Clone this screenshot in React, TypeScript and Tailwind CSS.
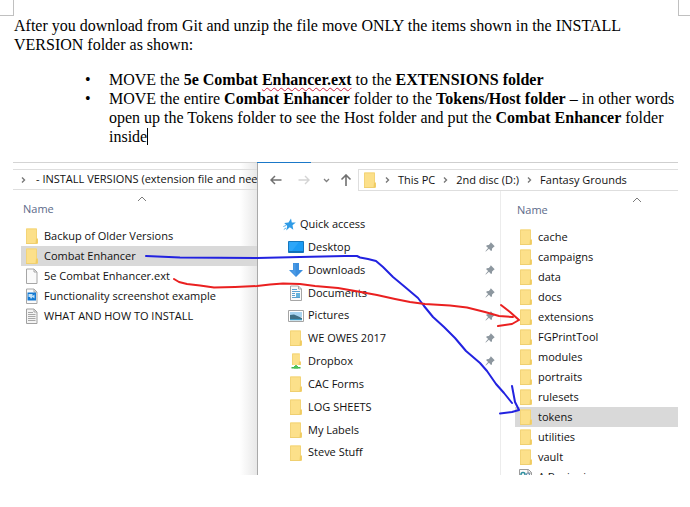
import type { ReactNode } from "react";

const selectedFolders = { left: "Combat Enhancer", right: "tokens" };

const FolderIcon = () => (
  <svg width="14" height="16" viewBox="0 0 14 16" aria-hidden="true">
    <path d="M1 .5h11v10l1 .8v4.200H1z" fill="#fce08a" />
    <path d="M1.500 15V1h10v9.500" fill="none" stroke="#f3d478" />
    <path d="M11 10.500h1.800v5H10.500z" fill="#efcb62" />
    <path d="M1 15.500h11" stroke="#efcf70" />
  </svg>
);

const DropboxIcon = () => (
  <svg width="14" height="16" viewBox="0 0 14 16" aria-hidden="true">
    <path d="M3 .5h8v8l.8.500v3H3z" fill="#fce08a" />
    <path d="M3.500 12V1h7" fill="none" stroke="#f3d478" />
    <path d="M10 8.500h1.800v3.500H9.500z" fill="#efcb62" />
    <path d="M7 12v2.500M2.500 14.800h9" stroke="#3fb64a" strokeWidth="1.600" />
    <path d="M5 13h4v2.500H5z" fill="#4cc257" />
  </svg>
);

const FileIcon = () => (
  <svg width="14" height="16" viewBox="0 0 14 16" aria-hidden="true">
    <path d="M1.500 1h7.500l3 3v11.500H1.500z" fill="#fafafa" stroke="#a6a6a6" />
    <path d="M9 1v3h3" fill="none" stroke="#a6a6a6" />
  </svg>
);

const ImageFileIcon = () => (
  <svg width="14" height="16" viewBox="0 0 14 16" aria-hidden="true">
    <path d="M1.500 1h7.500l3 3v11.500H1.500z" fill="#fafafa" stroke="#a6a6a6" />
    <path d="M9 1v3h3" fill="none" stroke="#a6a6a6" />
    <path d="M2.500 4.500h8.500v8H2.500z" fill="#1479d2" />
    <path d="M3.500 6h4v2l2-1.500v4L7.500 9l-1.500 2-1-2H3.500z" fill="#c4e3f8" />
  </svg>
);

const TextFileIcon = () => (
  <svg width="14" height="16" viewBox="0 0 14 16" aria-hidden="true">
    <path d="M1.500 1h7.500l3 3v11.500H1.500z" fill="#f4f4f4" stroke="#a0a0a0" />
    <path d="M9 1v3h3M3 4.500h5M3 6.500h7.500M3 8.500h7.500M3 10.500h7.500M3 12.500h7.500" fill="none" stroke="#a8a8a8" />
  </svg>
);

const ScriptFileIcon = () => (
  <svg width="14" height="16" viewBox="0 0 14 16" aria-hidden="true">
    <path d="M.500.500h9l3 3v12H.500z" fill="#fafafa" stroke="#9b9b9b" />
    <path d="M9 .5v3.500h3.500" fill="none" stroke="#9b9b9b" />
    <circle cx="4" cy="5.500" r="2" fill="none" stroke="#2f8f9f" strokeWidth="1.500" />
    <circle cx="9" cy="5.500" r="1.500" fill="none" stroke="#6a8fae" strokeWidth="1.200" />
  </svg>
);

const StarIcon = () => (
  <svg width="13" height="13" viewBox="0 0 13 13" aria-hidden="true">
    <path d="M8 .500 8.800 4.400 12.800 4.500 9.500 7.200 10.300 11.800 6.800 9.200 3.200 12.500 4.200 8 1.200 5 5.500 4.500z" fill="#2f9be6" />
    <path d="M.300 8.500 3 7.500M.800 11.500l2.200-1.500" stroke="#5bb2ec" strokeWidth="1" />
  </svg>
);

const DesktopIcon = () => (
  <svg width="16" height="14" viewBox="0 0 16 14" aria-hidden="true">
    <path d="M.500 1.500h15v11H.500z" fill="#1b9cf5" stroke="#1677bd" />
    <path d="M1 11h14v1.300H1z" fill="#1370b5" />
    <path d="M1 2h10L4 11H1z" fill="#2da6f8" />
  </svg>
);

const DownloadIcon = () => (
  <svg width="16" height="16" viewBox="0 0 16 16" aria-hidden="true">
    <path d="M5 1h6v7h4l-7 7-7-7h4z" fill="#3b8ede" />
    <path d="M5.500 1.500h2v8L8 14 2.500 8.500h3z" fill="#4c9be5" />
  </svg>
);

const DocumentIcon = () => (
  <svg width="16" height="16" viewBox="0 0 16 16" aria-hidden="true">
    <path d="M2.500 1h8l3 3v11.500h-11z" fill="#fafafa" stroke="#a6a6a6" />
    <path d="M10.500 1v3h3" fill="none" stroke="#a6a6a6" />
    <path d="M4 4.500h5M4 6.500h8M4 12.500h8M4 10.500h3M4 8.500h3" stroke="#5ba0cf" />
    <path d="M8 8h4v4H8z" fill="#65b3dd" />
  </svg>
);

const PicturesIcon = () => (
  <svg width="16" height="14" viewBox="0 0 16 14" aria-hidden="true">
    <path d="M.500 1.500h15v11H.500z" fill="#fff" stroke="#a4a4a4" />
    <path d="M2 3h12v5H2z" fill="#a9d4f0" />
    <path d="M2 6 6 5.500l8 3.500V11H2z" fill="#3f6f85" />
    <path d="M2 10h12v1.300H2z" fill="#3f9ac4" />
  </svg>
);

const PinIcon = () => (
  <svg width="10" height="10" viewBox="0 0 10 10" aria-hidden="true">
    <path d="M5.800.300 9.700 4.200 8.700 4.900 7.100 6.400 6.900 8.500 6 8.900 3.900 6.800.900 9.600.400 9.200 3.100 6.100 1.200 4.200 1.700 3.200 3.800 3 5.200 1.500z" fill="#8d979f" />
  </svg>
);

const Chevron = () => (
  <svg width="5" height="8" viewBox="0 0 5 8" className="shrink-0" aria-hidden="true">
    <path d="M1 1.500 3.500 4 1 6.500" fill="none" stroke="#777" strokeWidth="1.400" />
  </svg>
);

const SortMark = () => (
  <svg width="10" height="6" viewBox="0 0 10 6" aria-hidden="true">
    <path d="M1 5 5 1l4 4" fill="none" stroke="#7a7a7a" />
  </svg>
);

const BackIcon = () => (
  <svg width="12" height="10" viewBox="0 0 12 10" aria-hidden="true">
    <path d="M5 1 1 5l4 4M1 5h10.500" fill="none" stroke="#707070" strokeWidth="1.500" />
  </svg>
);

const ForwardIcon = () => (
  <svg width="12" height="10" viewBox="0 0 12 10" aria-hidden="true">
    <path d="m7 1 4 4-4 4M11 5H.500" fill="none" stroke="#d4d4d4" strokeWidth="1.400" />
  </svg>
);

const RecentIcon = () => (
  <svg width="7" height="5" viewBox="0 0 7 5" aria-hidden="true">
    <path d="m1 1 2.500 2.500L6 1" fill="none" stroke="#808080" strokeWidth="1.300" />
  </svg>
);

const UpIcon = () => (
  <svg width="12" height="12" viewBox="0 0 12 12" aria-hidden="true">
    <path d="M1.500 5.500 6 1l4.500 4.500M6 1v11" fill="none" stroke="#707070" strokeWidth="1.600" />
  </svg>
);

const installFiles = [
  { name: "Backup of Older Versions", icon: <FolderIcon /> },
  { name: "Combat Enhancer", icon: <FolderIcon /> },
  { name: "5e Combat Enhancer.ext", icon: <FileIcon /> },
  { name: "Functionality screenshot example", icon: <ImageFileIcon /> },
  { name: "WHAT AND HOW TO INSTALL", icon: <TextFileIcon /> },
];

const places = [
  { name: "Desktop", icon: <DesktopIcon />, pinned: true },
  { name: "Downloads", icon: <DownloadIcon />, pinned: true },
  { name: "Documents", icon: <DocumentIcon />, pinned: true },
  { name: "Pictures", icon: <PicturesIcon />, pinned: true },
  { name: "WE OWES 2017", icon: <FolderIcon />, pinned: true },
  { name: "Dropbox", icon: <DropboxIcon />, pinned: true },
  { name: "CAC Forms", icon: <FolderIcon />, pinned: false },
  { name: "LOG SHEETS", icon: <FolderIcon />, pinned: false },
  { name: "My Labels", icon: <FolderIcon />, pinned: false },
  { name: "Steve Stuff", icon: <FolderIcon />, pinned: false },
];

const groundsFolders = [
  "cache",
  "campaigns",
  "data",
  "docs",
  "extensions",
  "FGPrintTool",
  "modules",
  "portraits",
  "rulesets",
  "tokens",
  "utilities",
  "vault",
];

function FileRow({ name, icon, selected }: { name: string; icon: ReactNode; selected: boolean }) {
  return (
    <li>
      <button
        type="button"
        className={`flex h-5 w-full items-center gap-[5px] whitespace-nowrap pl-1 text-left ${selected ? "bg-[#d9d9d9]" : ""}`}
      >
        {icon}
        {name}
      </button>
    </li>
  );
}

function ColumnHeader({ markClass }: { markClass: string }) {
  return (
    <div className="flex h-9 flex-col pt-1.5 pl-0.5">
      <div className={`flex justify-center ${markClass}`}>
        <SortMark />
      </div>
      <button type="button" className="text-left leading-[14px] text-[#5c6b8a]">
        Name
      </button>
    </div>
  );
}

function InstallWindow() {
  return (
    <section className="w-[244px] shrink-0 overflow-hidden border-t border-[#d4d4d4] bg-linear-to-r from-white from-93% to-[#e8e8e8]">
      <div className="mt-1.5 flex h-[21px] items-center gap-2 whitespace-nowrap border-y border-[#dedede] pl-2">
        <Chevron />
        <button type="button" className="pl-0.5">
          - INSTALL VERSIONS (extension file and needed folder)
        </button>
      </div>
      <div className="pl-2">
        <ColumnHeader markClass="pl-1" />
        <ul>
          {installFiles.map((file) => (
            <FileRow key={file.name} {...file} selected={file.name === selectedFolders.left} />
          ))}
        </ul>
      </div>
    </section>
  );
}

function GroundsWindow() {
  return (
    <section className="flex min-w-0 flex-1 flex-col border-t border-l border-t-[#cfcfcf] border-l-[#a9a9a9] bg-white">
      <div className="mt-1.5 flex h-[22px] shrink-0 items-stretch">
        <div className="flex w-[100px] shrink-0 items-center pl-3">
          <button type="button" aria-label="Back" className="w-7">
            <BackIcon />
          </button>
          <button type="button" aria-label="Forward" className="w-[25px]">
            <ForwardIcon />
          </button>
          <button type="button" aria-label="Recent locations" className="w-[17px]">
            <RecentIcon />
          </button>
          <button type="button" aria-label="Up">
            <UpIcon />
          </button>
        </div>
        <nav className="flex flex-1 items-center gap-2 whitespace-nowrap border-y border-l border-[#dedede] pl-1">
          <FolderIcon />
          <Chevron />
          <button type="button">This PC</button>
          <Chevron />
          <button type="button">2nd disc (D:)</button>
          <Chevron />
          <button type="button">Fantasy Grounds</button>
        </nav>
      </div>
      <div className="flex min-h-0 flex-1">
        <aside className="w-[243px] shrink-0 border-r border-[#ececec] pt-[22px]">
          <ul className="grid h-[251px] auto-rows-fr pr-[5px]">
            <li className="flex items-center">
              <button type="button" className="flex items-center gap-1 pl-[25px]">
                <StarIcon />
                Quick access
              </button>
            </li>
            {places.map((place) => (
              <li key={place.name} className="flex items-center justify-between">
                <button type="button" className="flex items-center gap-1 pl-[30px]">
                  <span className="flex w-4 justify-center">{place.icon}</span>
                  {place.name}
                </button>
                {place.pinned && <PinIcon />}
              </li>
            ))}
          </ul>
        </aside>
        <div className="min-w-0 flex-1 overflow-hidden pl-3.5">
          <ColumnHeader markClass="pl-[78px]" />
          <ul>
            {groundsFolders.map((name) => (
              <FileRow key={name} name={name} icon={<FolderIcon />} selected={name === selectedFolders.right} />
            ))}
            <FileRow name="A.Beginnings" icon={<ScriptFileIcon />} selected={false} />
          </ul>
        </div>
      </div>
    </section>
  );
}

function MoveArrows() {
  return (
    <svg
      width="665"
      height="313"
      viewBox="13 162 665 313"
      className="pointer-events-none absolute top-0 left-0"
      fill="none"
      strokeWidth="2"
      strokeLinecap="round"
      strokeLinejoin="round"
      aria-hidden="true"
    >
      <g stroke="#2222e0">
        <path d="M146 256 180 257.500 257 258 300 257 345 256 357 256 360 257.500 368 259 376 261 383 267 393 277 405 287 418 298 424 306 433 317 444 327 455 338 466 351 480 363 487 371 496 384 504 393 512 403" />
        <path d="M512 386 515 402 519 410 512 412 500 413.500" />
      </g>
      <g stroke="#ea2020">
        <path d="M174 279 179 282 187 284 200 285.500 214 287.500 235 287 257 286 270 284.500 283 283.500 300 284 315 286 338 288 358 291.500 377 295 395 299 410 302 425 304 450 305.500 467 307.500 485 312 499 316 513 317" />
        <path d="M501 305 510 312 519 320 512 324 498 326" />
      </g>
    </svg>
  );
}

function Bullet({ children }: { children: ReactNode }) {
  return (
    <li className="flex">
      <span className="w-6 shrink-0" aria-hidden="true">
        •
      </span>
      <div>{children}</div>
    </li>
  );
}

export default function App() {
  return (
    <main className="min-h-screen bg-white text-black">
      <div className="flex justify-between">
        <div className="h-4 w-3.5 border-r border-b border-[#c0c0c0]" />
        <div className="h-4 w-3 border-b border-l border-[#c0c0c0]" />
      </div>
      <article className="pr-3 pl-3.5 font-['Liberation_Serif',serif] text-[16px] leading-[19px]">
        <p>
          After you download from Git and unzip the file move ONLY the items shown in the INSTALL VERSION folder as
          shown:
        </p>
        <ul className="mt-4 pl-[71px]">
          <Bullet>
            MOVE the{" "}
            <b>
              5e Combat{" "}
              <span className="underline decoration-[#d02040] decoration-wavy decoration-1 underline-offset-2">
                Enhancer.ext
              </span>
            </b>{" "}
            to the <b>EXTENSIONS folder</b>
          </Bullet>
          <Bullet>
            MOVE the entire <b>Combat Enhancer</b> folder to the <b>Tokens/Host folder</b> – in other words open up the
            Tokens folder to see the Host folder and put the <b>Combat Enhancer</b> folder
            <br />
            inside
            <span className="border-r border-black" />
          </Bullet>
        </ul>
      </article>
      <figure className="relative mt-4 mr-3 ml-[13px] flex h-[313px] overflow-hidden font-['Open_Sans','Noto_Sans',sans-serif] text-[11px] text-[#111]">
        <InstallWindow />
        <GroundsWindow />
        <div className="absolute top-0 left-[244px] h-px w-[54px] bg-[#1a78c8]" />
        <MoveArrows />
      </figure>
    </main>
  );
}
